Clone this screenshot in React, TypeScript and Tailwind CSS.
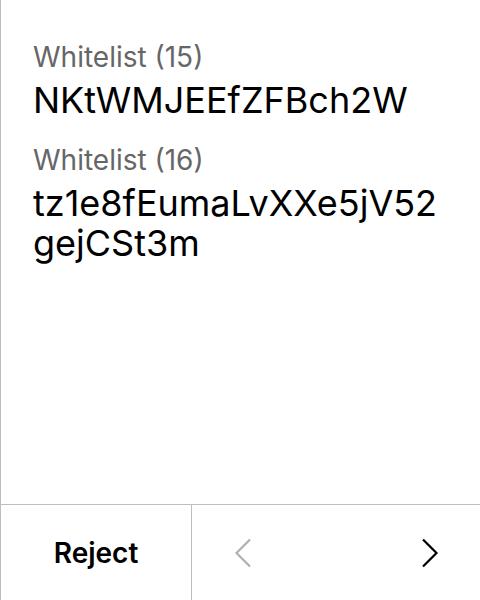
function Chevron({ dir, className }: { dir: "left" | "right"; className?: string }) {
    return (
        <svg className={className} viewBox="0 0 18 30" fill="none" stroke="currentColor" strokeWidth={2.2}>
            {dir === "left" ? <path d="M16 1.5 L2.5 15 L16 28.5" /> : <path d="M2 1.5 L15.5 15 L2 28.5" />}
        </svg>
    );
}

export default function App() {
    const entries = [
        { label: "Whitelist (15)", value: "NKtWMJEEfZFBch2W" },
        { label: "Whitelist (16)", value: "tz1e8fEumaLvXXe5jV52gejCSt3m" },
    ];

    return (
        <div className="w-[480px] h-[600px] flex flex-col bg-white border-l border-[#bdbdbd] font-['Inter',sans-serif]">
            {/* List */}
            <div className="flex-1 px-8 pt-[40px] flex flex-col gap-[23px]">
                {entries.map((entry) => (
                    <div key={entry.label}>
                        <div className="text-[28px] leading-[34px] text-[#666666]">{entry.label}</div>
                        <div className="mt-[6px] text-[36px] leading-[40px] text-black break-all">{entry.value}</div>
                    </div>
                ))}
            </div>

            {/* Footer */}
            <div className="h-[96px] flex border-t border-[#bdbdbd]">
                <button className="w-[191px] flex items-center justify-center text-[28px] font-semibold text-black border-r border-[#bdbdbd]">
                    Reject
                </button>
                <div className="flex-1 flex items-center justify-between pl-[42px] pr-[41px]">
                    <Chevron dir="left" className="w-[18px] h-[30px] text-[#b0b0b0]" />
                    <Chevron dir="right" className="w-[18px] h-[30px] text-black" />
                </div>
            </div>
        </div>
    );
}
